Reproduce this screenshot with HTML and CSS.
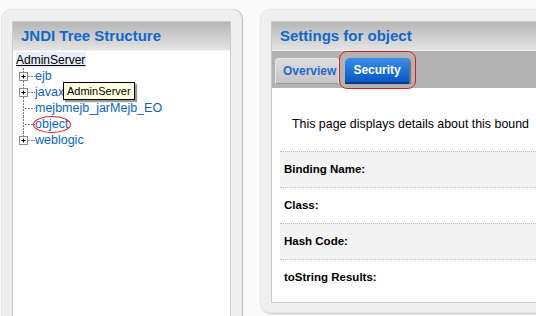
FILE: index.html
```html
<!DOCTYPE html>
<html lang="en">
<head>
    <meta charset="UTF-8">
    <title>JNDI Tree</title>
    <link rel="stylesheet" href="styles.css">
</head>
<body>
<div class="page">

    <!--左侧 JNDI 树-->
    <div class="side">
        <div class="box">
            <div class="head">JNDI Tree Structure</div>
            <div class="tree">
                <div class="root"><span>AdminServer</span></div>
                <ul>
                    <li>
                        <svg class="joint" width="18" height="16" viewBox="0 0 18 16"><path class="dots" d="M6.5 0V4M6.5 13V16M11 8.5H18"/><rect x="2.5" y="4.5" width="8" height="8" fill="#fff" stroke="#8a8a8a"/><path d="M4.5 8.5H8.5M6.5 6.5V10.5" stroke="#000"/></svg>
                        <a>ejb</a>
                    </li>
                    <li>
                        <svg class="joint" width="18" height="16" viewBox="0 0 18 16"><path class="dots" d="M6.5 0V4M6.5 13V16M11 8.5H18"/><rect x="2.5" y="4.5" width="8" height="8" fill="#fff" stroke="#8a8a8a"/><path d="M4.5 8.5H8.5M6.5 6.5V10.5" stroke="#000"/></svg>
                        <a>javax</a>
                    </li>
                    <li>
                        <svg class="joint" width="18" height="16" viewBox="0 0 18 16"><path class="dots" d="M6.5 0V16M8 8.5H18"/></svg>
                        <a>mejbmejb_jarMejb_EO</a>
                    </li>
                    <li>
                        <svg class="joint" width="18" height="16" viewBox="0 0 18 16"><path class="dots" d="M6.5 0V16M8 8.5H18"/></svg>
                        <a class="mark">object</a>
                    </li>
                    <li>
                        <svg class="joint" width="18" height="16" viewBox="0 0 18 16"><path class="dots" d="M6.5 0V4M11 8.5H18"/><rect x="2.5" y="4.5" width="8" height="8" fill="#fff" stroke="#8a8a8a"/><path d="M4.5 8.5H8.5M6.5 6.5V10.5" stroke="#000"/></svg>
                        <a>weblogic</a>
                    </li>
                </ul>
                <!--鼠标悬停提示-->
                <div class="tip">AdminServer</div>
            </div>
        </div>
    </div>

    <!--右侧 设置页-->
    <div class="main">
        <div class="box">
            <div class="head">Settings for object</div>
            <div class="tabs">
                <span class="tab">Overview</span>
                <span class="tab on">Security</span>
            </div>
            <p class="intro">This page displays details about this bound</p>
            <div class="rows">
                <div class="row">Binding Name:</div>
                <div class="row">Class:</div>
                <div class="row">Hash Code:</div>
                <div class="row">toString Results:</div>
            </div>
        </div>
    </div>

</div>
</body>
</html>
```

FILE: styles.css
```css
body{
    margin: 0;
    background-color: #fafafa;
    overflow: hidden;
    font-family: "Liberation Sans", Arial, sans-serif;
}

.page{
    display: flex;
    gap: 18px;
    padding: 9px 0 0 1px;
    width: 700px;
}

/*外框*/
.side, .main{
    box-sizing: border-box;
    background-color: #efefef;
    border: 1px solid #e6e6e6;
}
.side{
    width: 241px;
    height: 330px;
    padding: 11px 10px 0 10px;
    border-radius: 10px 10px 0 0;
    box-shadow: 1px 0 1px #bdbdbd;
}
.main{
    width: 420px;
    height: 304px;
    padding: 11px 0 9px 10px;
    border-radius: 10px 0 0 10px;
    box-shadow: 1px 1px 2px #c4c4c4;
}

.box{
    background-color: #fff;
    border: 1px solid #cbcbcb;
    height: 100%;
    box-sizing: border-box;
}
.side .box{
    height: 400px;
}

.head{
    height: 28px;
    line-height: 28px;
    padding-left: 8px;
    font-size: 15px;
    font-weight: bold;
    color: #1168cc;
    background: linear-gradient(#b6b6b6, #e4e4e4);
    border-bottom: 1px solid #f2f2f2;
}

/*树*/
.tree{
    position: relative;
    padding: 1px 0 0 3px;
    font-size: 12px;
}
.root{
    height: 16px;
    line-height: 16px;
}
.root span{
    display: inline-block;
    background-color: #e8eefa;
    color: #000;
    text-decoration: underline;
    padding-right: 1px;
}
.tree ul{
    margin: 0;
    padding: 0 0 0 1px;
    list-style: none;
}
.tree li{
    display: flex;
    align-items: center;
    height: 16px;
    line-height: 16px;
}
.joint{
    flex-shrink: 0;
}
.dots{
    fill: none;
    stroke: #7a7a7a;
    stroke-dasharray: 2 1;
}
.tree a{
    color: #0b63c6;
    font-size: 12.5px;
}
.mark{
    position: relative;
}
.mark::after{
    content: "";
    position: absolute;
    left: -2px;
    right: -3px;
    top: 0;
    bottom: -1px;
    border: 1px solid #e41a1a;
    border-radius: 50%;
}
.tip{
    position: absolute;
    left: 50px;
    top: 31px;
    padding: 0 3px;
    height: 16px;
    line-height: 16px;
    font-size: 11px;
    background-color: #ffffe1;
    border: 1px solid #000;
    box-shadow: 2px 2px 1px #9a9a9a;
}

/*选项卡*/
.tabs{
    display: flex;
    align-items: flex-end;
    gap: 6px;
    height: 37px;
    box-sizing: border-box;
    padding: 0 0 4px 3px;
    background-color: #b3b3b3;
}
.tab{
    position: relative;
    height: 26px;
    line-height: 25px;
    box-sizing: border-box;
    font-size: 12px;
    font-weight: bold;
    border-radius: 3px 3px 0 0;
}
.tab:first-child{
    padding: 0 2px 0 7px;
    color: #1a6ad0;
    background: linear-gradient(#dedede, #c4c4c4);
    border: 1px solid #e6e6e6;
    border-bottom: 1px solid #9c9c9c;
}
.tab.on{
    padding: 0 8px;
    color: #fff;
    background: linear-gradient(#3c8ce8, #0757c6);
    border-radius: 5px 5px 0 0;
    border-bottom: 2px solid #0b3c86;
    box-shadow: 2px 0 1px #6f6f6f;
}
.tab.on::after{  /*红色标注框*/
    content: "";
    position: absolute;
    left: -6px;
    right: -7px;
    top: -7px;
    bottom: -7px;
    border: 1px solid #e41a1a;
    border-radius: 8px;
    z-index: 2;
}

.intro{
    margin: 0;
    padding: 28px 0 19px 20px;
    font-size: 12.4px;
    line-height: 16px;
    color: #000;
    white-space: nowrap;
}

.rows{
    margin-left: 8px;
}
.row{
    height: 36px;
    line-height: 35px;
    box-sizing: border-box;
    border-top: 1px dotted #bdbdbd;
    padding-left: 4px;
    font-size: 11.5px;
    font-weight: bold;
}
.row:nth-child(odd){
    background-color: #f4f4f4;
}
```
